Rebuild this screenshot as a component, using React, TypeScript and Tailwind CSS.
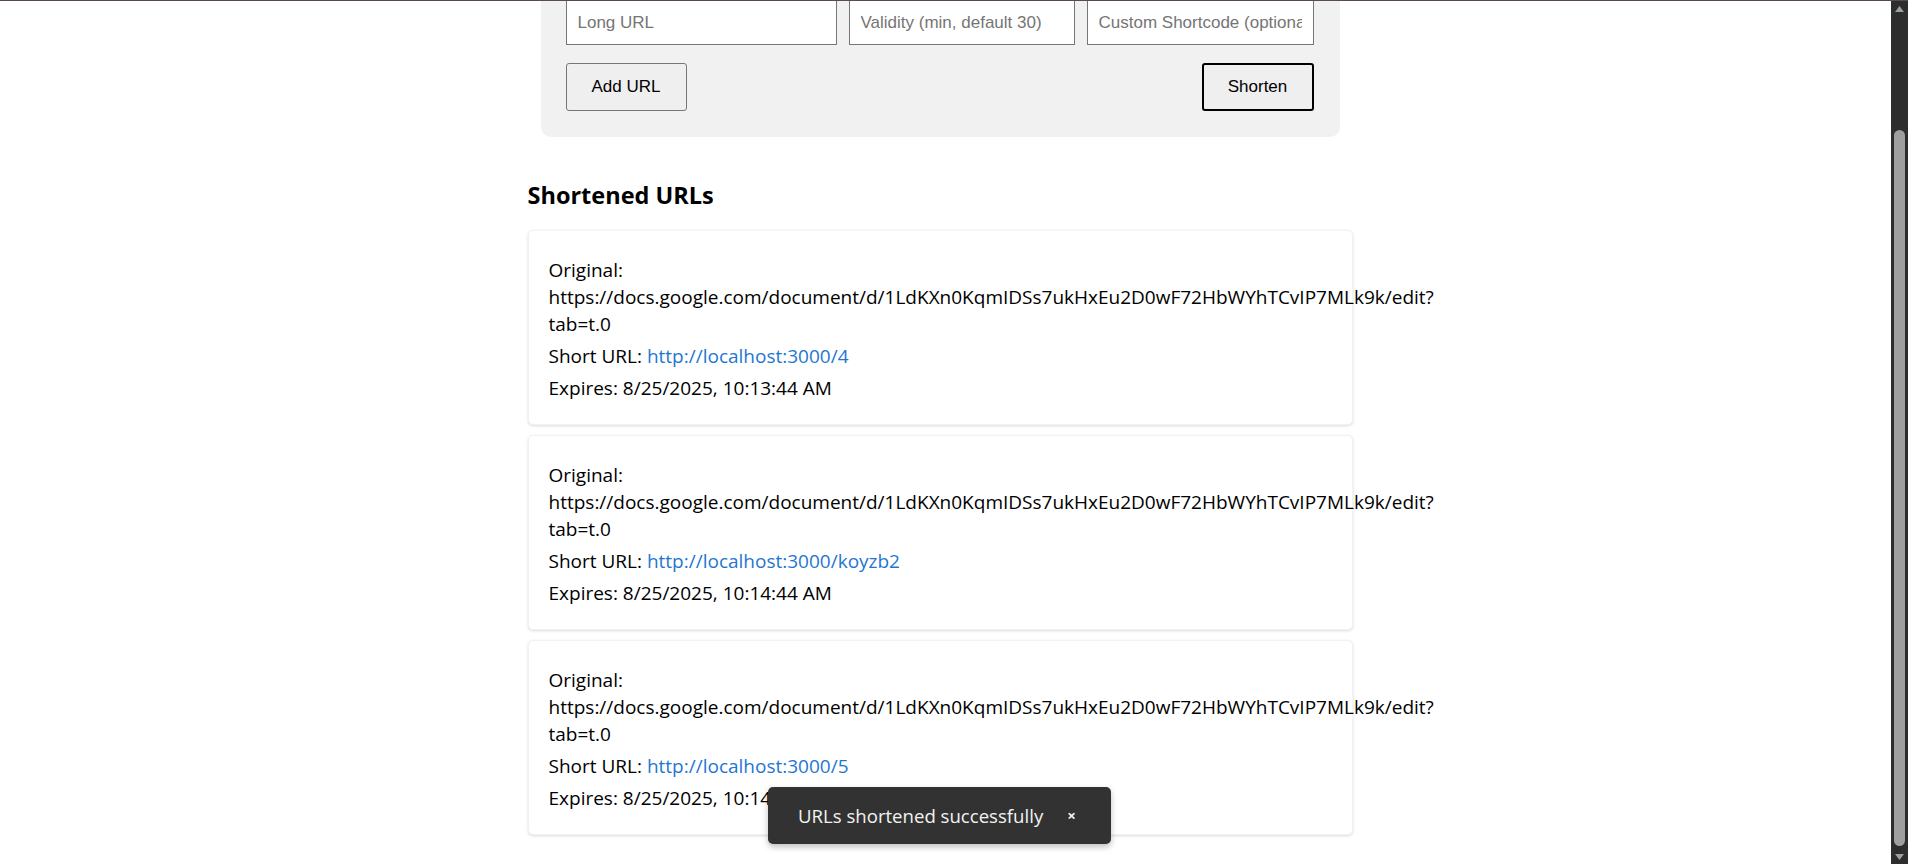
import React from "react";

type ShortLink = {
  id: string;
  original: string;
  query: string;
  short: string;
  expires: string;
};

const links: ShortLink[] = [
  {
    id: "4",
    original: "https://docs.google.com/document/d/1LdKXn0KqmIDSs7ukHxEu2D0wF72HbWYhTCvIP7MLk9k/edit?",
    query: "tab=t.0",
    short: "http://localhost:3000/4",
    expires: "8/25/2025, 10:13:44 AM",
  },
  {
    id: "koyzb2",
    original: "https://docs.google.com/document/d/1LdKXn0KqmIDSs7ukHxEu2D0wF72HbWYhTCvIP7MLk9k/edit?",
    query: "tab=t.0",
    short: "http://localhost:3000/koyzb2",
    expires: "8/25/2025, 10:14:44 AM",
  },
  {
    id: "5",
    original: "https://docs.google.com/document/d/1LdKXn0KqmIDSs7ukHxEu2D0wF72HbWYhTCvIP7MLk9k/edit?",
    query: "tab=t.0",
    short: "http://localhost:3000/5",
    expires: "8/25/2025, 10:14:58 AM",
  },
];

function LinkCard({ link }: { link: ShortLink }) {
  return (
    <div className="bg-white rounded-[5px] border border-[#f2f2f2] shadow-[0_1px_3px_rgba(0,0,0,0.14)] pl-[20px] pr-[20px] pt-[26px] pb-[21px] h-[195px]">
      <p className="text-[19px] leading-[27px] text-black">
        Original: {link.original}
        <wbr />
        {link.query}
      </p>
      <p className="text-[19px] leading-[27px] text-black mt-[5px]">
        Short URL:{" "}
        <a href="#" className="text-[#1f76d2]">
          {link.short}
        </a>
      </p>
      <p className="text-[19px] leading-[27px] text-black mt-[5px]">Expires: {link.expires}</p>
    </div>
  );
}

export default function App() {
  return (
    <div className="relative h-[864px] overflow-hidden bg-white flex font-['Open_Sans',sans-serif]">
      {/* window top edge */}
      <div className="absolute top-0 left-0 right-0 h-px bg-[#5a4b4b] z-10" />

      <main className="flex-1 flex justify-center pr-[11px]">
        <div className="w-[825px]">
          {/* Form panel */}
          <div className="mx-[13px] mt-[-27px] bg-[#f1f1f1] rounded-[10px] pt-[25px] pl-[25px] pr-[26px] pb-[26px] font-['Liberation_Sans',Arial,sans-serif]">
            <div className="flex justify-between">
              <input
                placeholder="Long URL"
                className="w-[271px] h-[47px] bg-white border border-[#767676] px-[11px] pt-[2px] text-[17px] text-black placeholder:text-[#757575] outline-none"
              />
              <input
                placeholder="Validity (min, default 30)"
                className="w-[226px] h-[47px] bg-white border border-[#767676] px-[11px] pt-[2px] text-[17px] text-black placeholder:text-[#757575] outline-none"
              />
              <input
                placeholder="Custom Shortcode (optional)"
                className="w-[227px] h-[47px] bg-white border border-[#767676] px-[11px] pt-[2px] text-[17px] text-black placeholder:text-[#757575] outline-none"
              />
            </div>
            <div className="flex justify-between mt-[18px]">
              <button className="w-[121px] h-[48px] bg-[#efefef] border border-[#767676] rounded-[3px] text-[17px] text-black">
                Add URL
              </button>
              <button className="w-[112px] h-[48px] bg-[#efefef] border-2 border-black rounded-[3px] text-[17px] text-black">
                Shorten
              </button>
            </div>
          </div>

          <h2 className="mt-[40px] text-[23.5px] leading-[36px] font-bold text-black">Shortened URLs</h2>

          <div className="mt-[17px] flex flex-col gap-[10px]">
            {links.map((l) => (
              <LinkCard key={l.id} link={l} />
            ))}
          </div>
        </div>
      </main>

      {/* scrollbar */}
      <div className="w-[17px] bg-[#2d2d2d] flex flex-col items-center shrink-0">
        <svg width="9" height="6" viewBox="0 0 9 6" className="mt-[6px]">
          <path d="M4.5 0L9 6H0z" fill="#9f9f9f" />
        </svg>
        <div className="w-[11px] mt-[118px] h-[716px] rounded-full bg-[#9f9f9f]" />
        <div className="flex-1" />
        <svg width="9" height="6" viewBox="0 0 9 6" className="mb-[4px]">
          <path d="M0 0H9L4.5 6z" fill="#9f9f9f" />
        </svg>
      </div>

      {/* toast */}
      <div className="absolute left-[768px] top-[787px] w-[343px] h-[57px] bg-[#323232] rounded-[5px] shadow-[0_3px_6px_rgba(0,0,0,0.25)] flex items-center pl-[30px]">
        <span className="text-[18.6px] text-[#f2f2f2]">URLs shortened successfully</span>
        <span className="ml-[24px] text-[15px] font-bold text-[#f2f2f2] leading-none">×</span>
      </div>
    </div>
  );
}
